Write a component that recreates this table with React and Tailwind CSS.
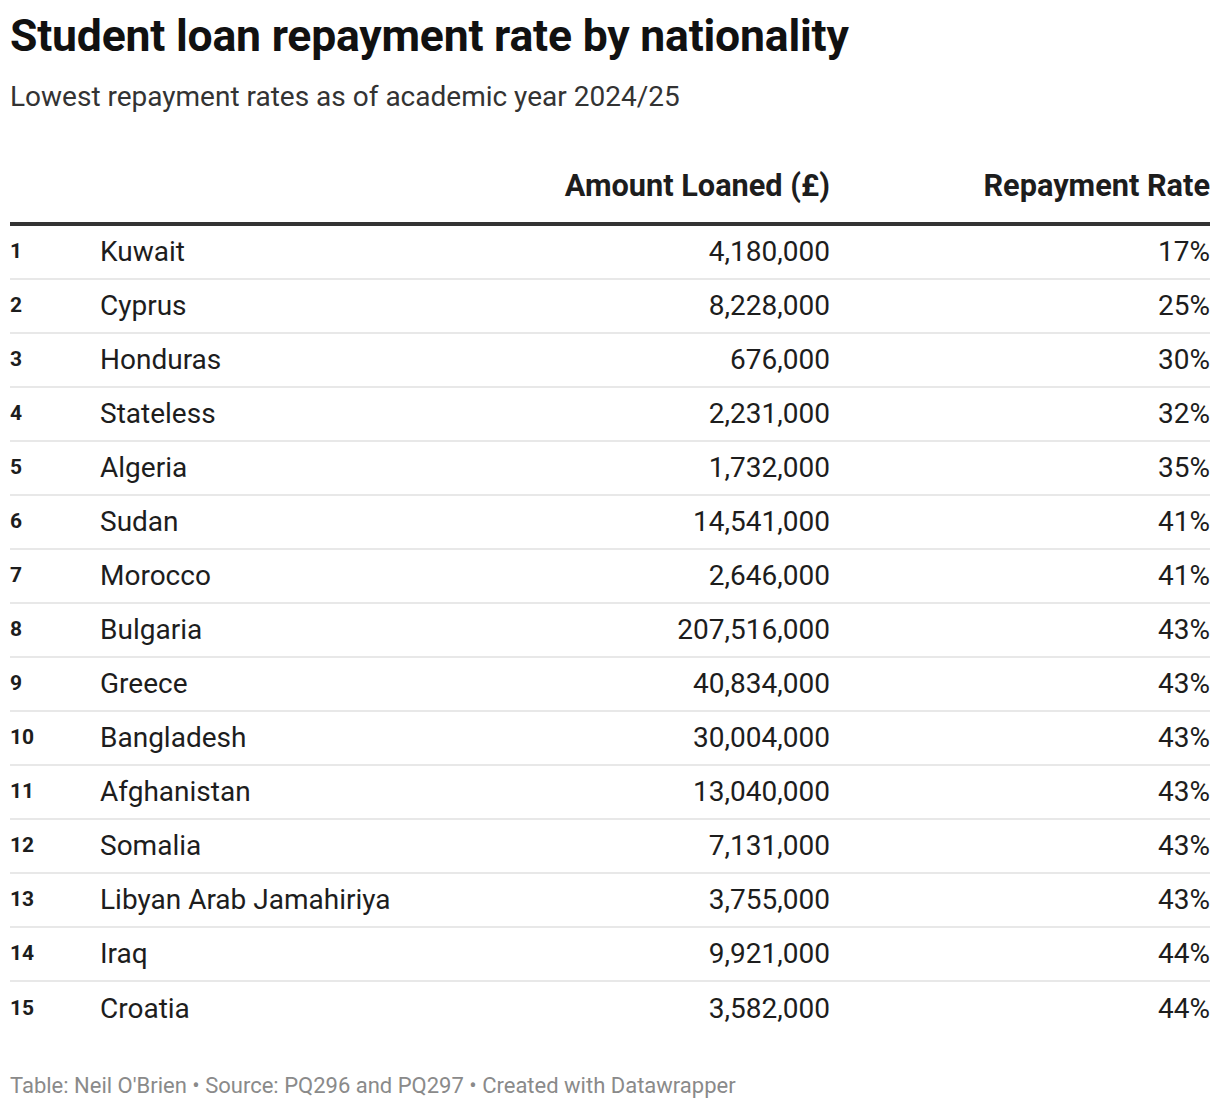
import React from "react";

const rows = [
  ["Kuwait", "4,180,000", "17%"],
  ["Cyprus", "8,228,000", "25%"],
  ["Honduras", "676,000", "30%"],
  ["Stateless", "2,231,000", "32%"],
  ["Algeria", "1,732,000", "35%"],
  ["Sudan", "14,541,000", "41%"],
  ["Morocco", "2,646,000", "41%"],
  ["Bulgaria", "207,516,000", "43%"],
  ["Greece", "40,834,000", "43%"],
  ["Bangladesh", "30,004,000", "43%"],
  ["Afghanistan", "13,040,000", "43%"],
  ["Somalia", "7,131,000", "43%"],
  ["Libyan Arab Jamahiriya", "3,755,000", "43%"],
  ["Iraq", "9,921,000", "44%"],
  ["Croatia", "3,582,000", "44%"],
];

export default function App() {
  return (
    <div className="w-[1220px] h-[1110px] bg-white px-[10px] text-[#1d1d1d] font-['Roboto',sans-serif]">
      <h1 className="pt-[10px] text-[44.5px] leading-[52px] font-bold tracking-[-0.2px] text-[#111]">
        Student loan repayment rate by nationality
      </h1>
      <p className="mt-[18px] text-[28px] leading-[34px] text-[#333]">
        Lowest repayment rates as of academic year 2024/25
      </p>

      <div className="mt-[54px]">
        <div className="flex items-end pb-[18px] border-b-4 border-[#333] text-[30.7px] font-bold leading-[36px]">
          <div className="w-[90px]" />
          <div className="flex-1" />
          <div className="w-[300px] text-right">Amount Loaned (£)</div>
          <div className="w-[380px] text-right">Repayment Rate</div>
        </div>
        {rows.map((r, i) => (
          <div
            key={r[0]}
            className={
              "flex items-center h-[54px] text-[28px] " +
              (i < rows.length - 1 ? "border-b-2 border-[#e8e8e8]" : "")
            }
          >
            <div className="w-[90px] text-[21px] font-bold">{i + 1}</div>
            <div className="flex-1">{r[0]}</div>
            <div className="w-[300px] text-right">{r[1]}</div>
            <div className="w-[380px] text-right">{r[2]}</div>
          </div>
        ))}
      </div>

      <p className="mt-[36px] text-[22px] leading-[28px] text-[#8a8a8a]">
        Table: Neil O'Brien • Source: PQ296 and PQ297 • Created with Datawrapper
      </p>
    </div>
  );
}
